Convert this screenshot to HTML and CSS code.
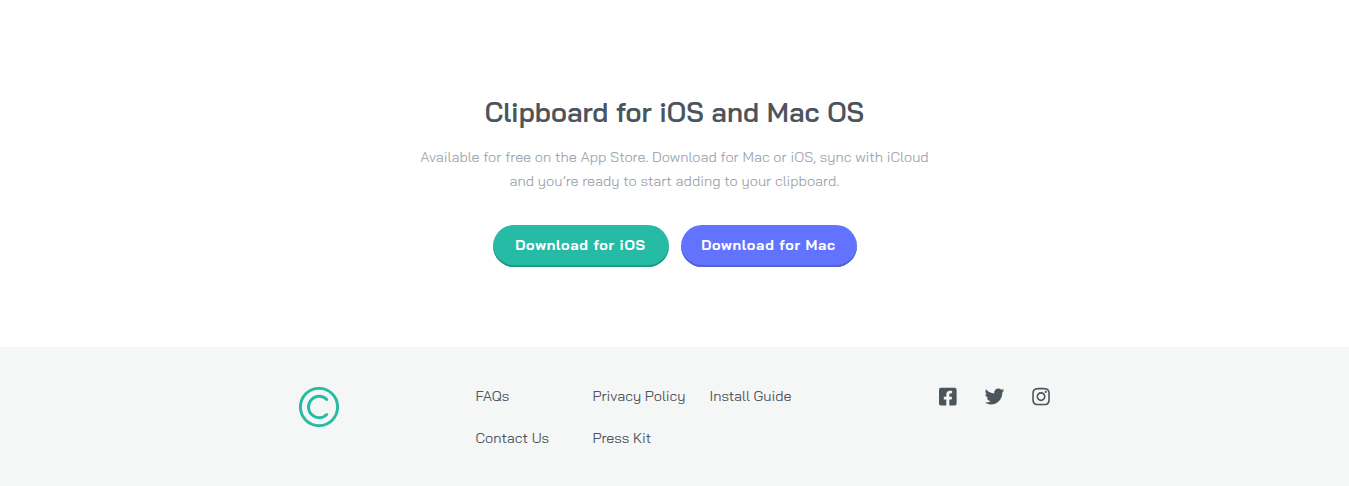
FILE: index.html
```html
<!DOCTYPE html>
<html lang="en">
<head>
<meta charset="utf-8">
<title>Clipboard</title>
<link rel="stylesheet" href="styles.css">
</head>
<body>
<main class="download">
  <h2 class="title">Clipboard for iOS and Mac OS</h2>
  <p class="lead">Available for free on the App Store. Download for Mac or iOS, sync with iCloud<br>and you’re ready to start adding to your clipboard.</p>
  <div class="buttons">
    <a class="button ios">Download for iOS</a>
    <a class="button mac">Download for Mac</a>
  </div>
</main>
<footer class="footer">
  <svg class="logo" width="40" height="40" viewBox="0 0 40 40"><circle cx="20" cy="20" r="18.6"/><path d="M27.8 12.5A10.7 10.7 0 1 0 27.8 27.5"/></svg>
  <nav class="links">
    <a class="faqs">FAQs</a><a class="privacy">Privacy Policy</a><a class="guide">Install Guide</a>
    <a class="contact">Contact Us</a><a class="press">Press Kit</a>
  </nav>
  <div class="social">
    <svg width="18" height="20" viewBox="0 11 458 509"><path d="M400 32H48A48 48 0 0 0 0 80v352a48 48 0 0 0 48 48h137.25V327.69h-63V256h63v-54.64c0-62.15 37-96.48 93.67-96.48 27.14 0 55.52 4.84 55.52 4.84v61h-31.27c-30.81 0-40.42 19.12-40.42 38.73V256h68.78l-11 71.69h-57.78V480H400a48 48 0 0 0 48-48V80a48 48 0 0 0-48-48z"/></svg>
    <svg class="twitter" width="20" height="20" viewBox="10 11 520 520"><path d="M459.37 151.716c.325 4.548.325 9.097.325 13.645 0 138.72-105.583 298.558-298.558 298.558-59.452 0-114.68-17.219-161.137-47.106 8.447.974 16.568 1.299 25.34 1.299 49.055 0 94.213-16.568 130.274-44.832-46.132-.975-84.792-31.188-98.112-72.772 6.498.974 12.995 1.624 19.818 1.624 9.421 0 18.843-1.3 27.614-3.573-48.081-9.747-84.143-51.98-84.143-102.985v-1.299c13.969 7.797 30.214 12.67 47.431 13.319-28.264-18.843-46.781-51.005-46.781-87.391 0-19.492 5.197-37.36 14.294-52.954 51.655 63.675 129.3 105.258 216.365 109.807-1.624-7.797-2.599-15.918-2.599-24.04 0-57.828 46.782-104.934 104.934-104.934 30.213 0 57.502 12.67 76.67 33.137 23.715-4.548 46.456-13.32 66.599-25.34-7.798 24.366-24.366 44.833-46.132 57.827 21.117-2.273 41.584-8.122 60.426-16.243-14.292 20.791-32.161 39.308-52.628 54.253z"/></svg>
    <svg width="18" height="20" viewBox="-6 11 458 509"><path d="M224.1 141c-63.6 0-114.9 51.3-114.9 114.9s51.3 114.9 114.9 114.9S339 319.5 339 255.9 287.7 141 224.1 141zm0 189.6c-41.1 0-74.7-33.5-74.7-74.7s33.5-74.7 74.7-74.7 74.7 33.5 74.7 74.7-33.6 74.7-74.7 74.7zm146.4-194.3c0 14.9-12 26.8-26.8 26.8-14.9 0-26.8-12-26.8-26.8s12-26.8 26.8-26.8 26.8 12 26.8 26.8zm76.1 27.2c-1.7-35.9-9.9-67.7-36.2-93.9-26.2-26.2-58-34.4-93.9-36.2-37-2.1-147.9-2.1-184.9 0-35.8 1.7-67.6 9.9-93.9 36.1s-34.4 58-36.2 93.9c-2.1 37-2.1 147.9 0 184.9 1.7 35.9 9.9 67.7 36.2 93.9s58 34.4 93.9 36.2c37 2.1 147.9 2.1 184.9 0 35.9-1.7 67.7-9.9 93.9-36.2 26.2-26.2 34.4-58 36.2-93.9 2.1-37 2.1-147.8 0-184.8zM398.8 388c-7.8 19.6-22.9 34.7-42.6 42.6-29.5 11.7-99.5 9-132.1 9s-102.7 2.6-132.1-9c-19.6-7.8-34.7-22.9-42.6-42.6-11.7-29.5-9-99.5-9-132.1s-2.6-102.7 9-132.1c7.8-19.6 22.9-34.7 42.6-42.6 29.5-11.7 99.5-9 132.1-9s102.7-2.6 132.1 9c19.6 7.8 34.7 22.9 42.6 42.6 11.7 29.5 9 99.5 9 132.1s2.7 102.7-9 132.1z"/></svg>
  </div>
</footer>
</body>
</html>
```
FILE: styles.css
```css
* { box-sizing: border-box; }
body { margin: 0; background: #fff; color: #4c545c; font-family: "Bai Jamjuree", Roboto, sans-serif; font-size: 14.4px; }
.download { height: 347px; padding-top: 94px; text-align: center; }
.title { margin: 0; font-size: 27.2px; line-height: 36px; font-weight: 600; }
.lead { margin: 15px 0 0; line-height: 24px; font-weight: 400; color: #9fa8b0; white-space: nowrap; }
.buttons { display: flex; justify-content: center; gap: 12px; margin-top: 32px; }
.button { width: 176px; height: 42px; border-radius: 21px; line-height: 40px; font-weight: 700; letter-spacing: 0.7px; color: #fff; }
.ios { background: #26bba5; box-shadow: inset 0 -2px #219785; }
.mac { background: #6173ff; box-shadow: inset 0 -2px #5362cf; }
.footer { display: flex; height: 139px; padding: 40px 299px 0 299px; background: #f5f7f6; }
.logo { fill: none; stroke: #26bba5; stroke-width: 2.9; stroke-linecap: round; }
.links { display: grid; grid-template-columns: 117px 117px 117px; grid-auto-rows: 18px; row-gap: 24px; line-height: 18px; margin-left: 136.5px; white-space: nowrap; }
.social { display: flex; margin-left: auto; fill: #4c545c; }
.social svg { overflow: visible; }
.twitter { margin: 0 27px 0 28px; }
```
